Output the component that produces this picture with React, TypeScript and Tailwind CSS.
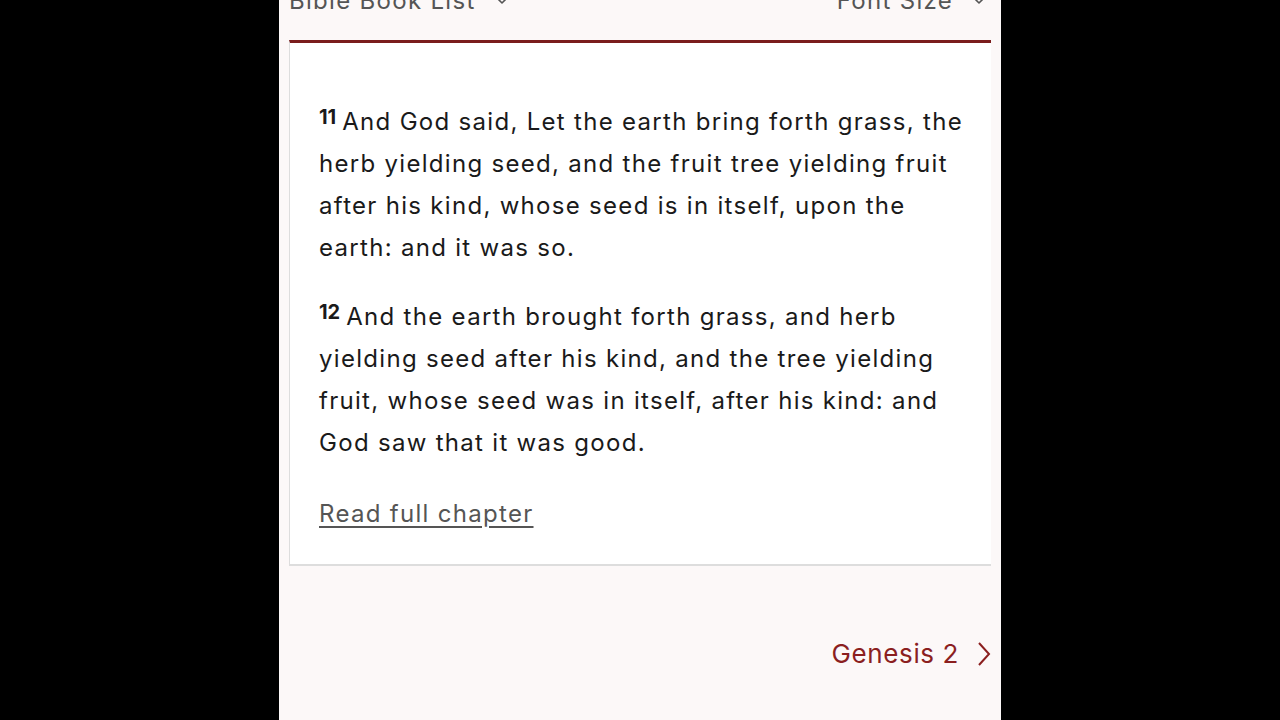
import { ChevronDown } from "lucide-react";

const verses = [
  {
    num: "11",
    text: "And God said, Let the earth bring forth grass, the herb yielding seed, and the fruit tree yielding fruit after his kind, whose seed is in itself, upon the earth: and it was so.",
  },
  {
    num: "12",
    text: "And the earth brought forth grass, and herb yielding seed after his kind, and the tree yielding fruit, whose seed was in itself, after his kind: and God saw that it was good.",
  },
];

export default function App() {
  return (
    <div
      className="w-[1280px] h-[720px] bg-black flex justify-center overflow-hidden tracking-[1.3px]"
      style={{ fontFamily: "Inter, 'Noto Sans', sans-serif" }}
    >
      <div className="w-[722px] h-full bg-[#fcf8f8] px-[10px] flex flex-col">
        {/* top bar, scrolled mostly out of view */}
        <div className="-mt-[14px] h-[54px] flex items-start justify-between text-[24px] text-[#555] leading-[30px]">
          <div className="flex items-center gap-[14px]">
            <span>Bible Book List</span>
            <ChevronDown size={24} strokeWidth={1.6} className="-mt-[2px]" />
          </div>
          <div className="flex items-center gap-[14px]">
            <span>Font Size</span>
            <ChevronDown size={24} strokeWidth={1.6} className="-mt-[2px]" />
          </div>
        </div>

        <div className="bg-white border-t-[3px] border-t-[#7a1d1d] border-l border-l-[#ddd] border-b-2 border-b-[#ddd] pl-[29px] pr-[20px] pt-[58px] pb-[32px]">
          {verses.map((v) => (
            <p key={v.num} className="text-[24px] leading-[42px] text-[#1a1a1a] mb-[27px]">
              <sup className="text-[20px] font-bold mr-[6px] top-[-0.3em] tracking-normal">{v.num}</sup>
              {v.text}
            </p>
          ))}
          <a href="#" className="block mt-[32px] text-[24px] leading-[36px] text-[#555] underline underline-offset-4">
            Read full chapter
          </a>
        </div>

        <div className="mt-[68px] flex justify-end items-center gap-[18px] text-[26px] text-[#8b1f1f] tracking-[0.6px]">
          <span>Genesis 2</span>
          <svg width="14" height="26" viewBox="0 0 14 26" fill="none" stroke="currentColor" strokeWidth="2">
            <path d="M2 2 L12 13 L2 24" />
          </svg>
        </div>
      </div>
    </div>
  );
}
